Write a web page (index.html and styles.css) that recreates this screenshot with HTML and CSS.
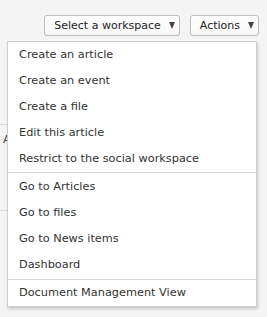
FILE: index.html
```html
<!DOCTYPE html>
<html lang="en">
<head>
  <meta charset="UTF-8" />
  <title>Actions menu</title>
  <link rel="stylesheet" href="styles.css">
</head>
<body>
  <div class="toolbar">
    <button class="drop-btn">Select a workspace <span class="caret"></span></button>
    <button class="drop-btn">Actions <span class="caret"></span></button>

    <div class="menu">
      <ul class="menu-group">
        <li>Create an article</li>
        <li>Create an event</li>
        <li>Create a file</li>
        <li>Edit this article</li>
        <li>Restrict to the social workspace</li>
      </ul>
      <ul class="menu-group middle">
        <li>Go to Articles</li>
        <li>Go to files</li>
        <li>Go to News items</li>
        <li>Dashboard</li>
      </ul>
      <ul class="menu-group">
        <li>Document Management View</li>
      </ul>
    </div>
  </div>

  <div class="content">
    <div class="content-row"><span class="cut-off">A</span></div>
    <div class="content-row last"></div>
  </div>
</body>
</html>
```

FILE: styles.css
```css
body {
  margin: 0;
  background: #f4f4f4;
  color: #333;
  font-family: "DejaVu Sans", "Noto Sans", sans-serif;
  font-size: 11.3px;
}

.toolbar {
  position: relative;
  display: flex;
  justify-content: flex-end;
  gap: 10px;
  padding: 15px 8px 0 0;
}

.drop-btn {
  display: flex;
  align-items: center;
  gap: 8px;
  height: 21px;
  padding: 0 4px 0 9px;
  background: linear-gradient(#fff, #f6f6f6);
  border: 1px solid #bdbdbd;
  border-radius: 3px;
  color: #222;
  font-family: inherit;
  font-size: 11px;
}

.caret {
  width: 0;
  height: 0;
  border-left: 3.5px solid transparent;
  border-right: 3.5px solid transparent;
  border-top: 7px solid #444;
}

.menu {
  position: absolute;
  top: 41px;
  left: 7px;
  width: 248px;
  background: #fff;
  border: 1px solid #cfcfcf;
  box-shadow: 1px 2px 3px rgba(0, 0, 0, 0.18);
  z-index: 2;
}

.menu-group {
  list-style: none;
  margin: 0;
  padding: 0;
}

.menu-group.middle {
  padding: 1px 0;
}

.menu-group + .menu-group {
  border-top: 1px solid #d6d6d6;
}

.menu-group li {
  height: 26px;
  line-height: 26px;
  padding-left: 11px;
  color: #333;
}

.content {
  width: 240px;
  margin-top: 88px;
}

.content-row {
  height: 86px;
  padding: 8px 0 0 3px;
  border-top: 1px solid #dcdcdc;
  box-sizing: border-box;
  color: #444;
}

.content-row.last {
  height: 107px;
}
```
